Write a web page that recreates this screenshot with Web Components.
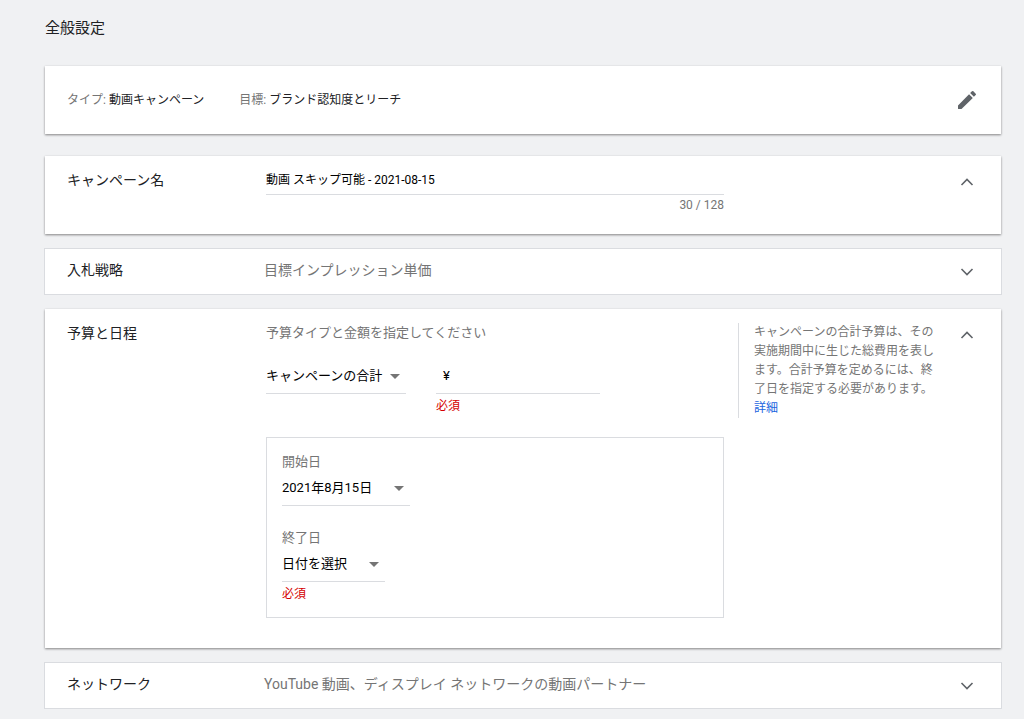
<!DOCTYPE html>
<html lang="ja">
<head>
<meta charset="utf-8">
<meta name="viewport" content="width=device-width, initial-scale=1">
<title>全般設定</title>
<style>
	body {
		margin: 0;
		background: #f0f1f3;
		color: #202124;
		font-family: Roboto, "Noto Sans CJK JP", sans-serif;
		font-size: 13px;
		line-height: 20px;
	}
</style>
</head>
<body>
<campaign-settings></campaign-settings>

<script>
(function() {
	// attaches an open shadow root with the given markup
	function render(host, html) {
		let template = document.createElement("template");
		template.innerHTML = html;
		let root = host.attachShadow({mode: "open"});
		root.appendChild(template.content.cloneNode(true));
		return root;
	}

	const ICONS = {
		edit: `<path fill="currentColor" d="M3 17.5V20.4c0 .4.2.6.6.6H6.500L17.810 9.940l-3.750-3.750zM20.710 7.040a1 1 0 0 0 0-1.410l-2.340-2.340a1 1 0 0 0-1.410 0l-1.830 1.830 3.750 3.750z"/>`,
		up: `<path fill="none" stroke="currentColor" stroke-width="1.6" d="M6.500 15L12 9.500L17.500 15"/>`,
		down: `<path fill="none" stroke="currentColor" stroke-width="1.6" d="M6.500 9L12 14.500L17.500 9"/>`
	};

	const ARROW = `<svg class="arrow" width="10" height="5" viewBox="0 0 10 5" aria-hidden="true"><path fill="#757575" d="M0 0h10L5 5z"/></svg>`;

	class IconButton extends HTMLElement {
		connectedCallback() {
			if (this.shadowRoot) return;
			render(this, `
				<style>
				:host {
					display: block;
				}
				button {
					display: block;
					width: 24px;
					height: 24px;
					padding: 0;
					border: 0;
					background: none;
					color: #5f6368;
					cursor: pointer;
				}
				svg {
					display: block;
				}
				</style>
				<button type="button" aria-label="${this.getAttribute("label")}">
					<svg width="24" height="24" viewBox="0 0 24 24" aria-hidden="true">${ICONS[this.getAttribute("icon")]}</svg>
				</button>
			`);
		}
	}

	class SummaryCard extends HTMLElement {
		constructor() {
			super();
			render(this, `
				<style>
				:host {
					display: flex;
					align-items: center;
					gap: 35px;
					padding: 22px;
					background: #fff;
					box-shadow: 0 1px 2px rgba(0, 0, 0, .36), 0 1px 3px rgba(0, 0, 0, .12);
					font-size: 12px;
				}
				icon-button {
					margin-left: auto;
				}
				</style>
				<slot></slot>
				<icon-button icon="edit" label="編集"></icon-button>
			`);
		}
	}

	// One row of the form. "open" panels are raised, the others are outlined.
	class SettingPanel extends HTMLElement {
		connectedCallback() {
			if (this.shadowRoot) return;
			let open = this.hasAttribute("open");
			render(this, `
				<style>
				:host {
					display: grid;
					grid-template-columns: 183px minmax(0, 1fr) 24px;
					align-items: start;
					column-gap: 14px;
					margin: 0 -1px;
					padding: 11px 22px 10px;
					border: 1px solid #dadce0;
					background: #fff;
				}
				:host([open]) {
					grid-template-columns: 185px minmax(0, 1fr) 203px 24px;
					margin: 0;
					padding: 14px 22px 19px;
					border: 0;
					box-shadow: 0 1px 2px rgba(0, 0, 0, .36), 0 1px 3px rgba(0, 0, 0, .12);
				}
				:host([tall]) {
					padding-bottom: 30px;
				}
				h2 {
					margin: 0;
					font-size: 14px;
					font-weight: 400;
				}
				.body {
					min-width: 0;
				}
				:host(:not([open])) .body {
					color: #757575;
					font-size: 14px;
				}
				</style>
				<h2>${this.getAttribute("heading")}</h2>
				<div class="body"><slot></slot></div>
				${open ? `<div><slot name="help"></slot></div>` : ""}
				<icon-button icon="${open ? "up" : "down"}" label="${open ? "閉じる" : "開く"}"></icon-button>
			`);
		}
	}

	class NameField extends HTMLElement {
		connectedCallback() {
			if (this.shadowRoot) return;
			render(this, `
				<style>
				:host {
					display: block;
					font-size: 12px;
				}
				input {
					display: block;
					box-sizing: border-box;
					width: 100%;
					height: 25px;
					padding: 0 0 8px;
					border: 0;
					border-bottom: 1px solid #dadce0;
					background: none;
					color: #000;
					font: inherit;
					outline: 0;
				}
				div {
					color: #757575;
					text-align: right;
				}
				</style>
				<input type="text" aria-label="キャンペーン名" maxlength="128" value="${this.getAttribute("value")}">
				<div>${this.getAttribute("counter")}</div>
			`);
		}
	}

	class BudgetFields extends HTMLElement {
		constructor() {
			super();
			render(this, `
				<style>
				:host {
					display: flex;
					align-items: flex-start;
					gap: 30px;
					color: #000;
				}
				.select {
					display: grid;
					align-items: center;
					width: 140px;
					padding-bottom: 7px;
					border-bottom: 1px solid #dadce0;
				}
				.select > * {
					grid-area: 1 / 1;
				}
				select {
					appearance: none;
					width: 100%;
					height: 20px;
					padding: 0;
					border: 0;
					background: none;
					color: inherit;
					font: inherit;
					outline: 0;
				}
				.arrow {
					justify-self: end;
					margin-right: 6px;
					pointer-events: none;
				}
				.amount {
					width: 164px;
				}
				.amount label {
					display: flex;
					gap: 4px;
					padding: 0 0 7px 7px;
					border-bottom: 1px solid #dadce0;
				}
				input {
					flex: 1;
					min-width: 0;
					height: 20px;
					padding: 0;
					border: 0;
					background: none;
					font: inherit;
					outline: 0;
				}
				.error {
					color: #d50000;
					font-size: 12px;
					line-height: 24px;
				}
				</style>
				<div class="select">
					<select aria-label="予算タイプ">
						<option>キャンペーンの合計</option>
						<option>日別</option>
					</select>
					${ARROW}
				</div>
				<div class="amount">
					<label>¥ <input type="text" inputmode="numeric" aria-label="金額" aria-describedby="error"></label>
					<div class="error" id="error">必須</div>
				</div>
			`);
		}
	}

	class DateField extends HTMLElement {
		connectedCallback() {
			if (this.shadowRoot) return;
			let error = this.getAttribute("error");
			render(this, `
				<style>
				:host {
					display: block;
				}
				label {
					display: block;
					margin-bottom: 6px;
					color: #757575;
				}
				button {
					display: flex;
					align-items: center;
					gap: 22px;
					padding: 0 6px 7px 0;
					border: 0;
					border-bottom: 1px solid #dadce0;
					background: none;
					color: #000;
					font: inherit;
					cursor: pointer;
				}
				.error {
					color: #d50000;
					font-size: 12px;
					line-height: 24px;
				}
				</style>
				<label for="date">${this.getAttribute("label")}</label>
				<button type="button" id="date"><span>${this.getAttribute("value")}</span>${ARROW}</button>
				${error ? `<div class="error">${error}</div>` : ""}
			`);
		}
	}

	class HelpText extends HTMLElement {
		constructor() {
			super();
			render(this, `
				<style>
				:host {
					display: block;
					padding-left: 15px;
					border-left: 1px solid #dadce0;
					color: #757575;
					font-size: 12px;
					line-height: 19px;
				}
				a {
					display: block;
					color: #1a65e0;
					text-decoration: none;
				}
				</style>
				<slot></slot>
				<a href="#">詳細</a>
			`);
		}
	}

	class CampaignSettings extends HTMLElement {
		constructor() {
			super();
			render(this, `
				<style>
				:host {
					display: block;
					padding: 17px 23px 10px 45px;
				}
				h1 {
					margin: 0 0 27px;
					font-size: 15px;
					font-weight: 400;
					line-height: 22px;
				}
				summary-card {
					margin-bottom: 22px;
				}
				summary-card span {
					color: #757575;
				}
				.panels {
					display: flex;
					flex-direction: column;
					gap: 14px;
				}
				.prompt {
					margin: 0 0 23px;
					color: #757575;
				}
				.dates {
					display: grid;
					gap: 22px;
					margin-top: 19px;
					padding: 14px 15px 11px;
					border: 1px solid #dadce0;
				}
				</style>
				<h1>全般設定</h1>
				<summary-card>
					<div><span>タイプ:</span> 動画キャンペーン</div>
					<div><span>目標:</span> ブランド認知度とリーチ</div>
				</summary-card>
				<div class="panels">
					<setting-panel heading="キャンペーン名" open>
						<name-field value="動画 スキップ可能 - 2021-08-15" counter="30 / 128"></name-field>
					</setting-panel>
					<setting-panel heading="入札戦略">目標インプレッション単価</setting-panel>
					<setting-panel heading="予算と日程" open tall>
						<p class="prompt">予算タイプと金額を指定してください</p>
						<budget-fields></budget-fields>
						<div class="dates">
							<date-field label="開始日" value="2021年8月15日"></date-field>
							<date-field label="終了日" value="日付を選択" error="必須"></date-field>
						</div>
						<help-text slot="help">キャンペーンの合計予算は、その実施期間中に生じた総費用を表します。合計予算を定めるには、終了日を指定する必要があります。</help-text>
					</setting-panel>
					<setting-panel heading="ネットワーク">YouTube 動画、ディスプレイ ネットワークの動画パートナー</setting-panel>
				</div>
			`);
		}
	}

	customElements.define("icon-button", IconButton);
	customElements.define("summary-card", SummaryCard);
	customElements.define("setting-panel", SettingPanel);
	customElements.define("name-field", NameField);
	customElements.define("budget-fields", BudgetFields);
	customElements.define("date-field", DateField);
	customElements.define("help-text", HelpText);
	customElements.define("campaign-settings", CampaignSettings);
})();
</script>
</body>
</html>
